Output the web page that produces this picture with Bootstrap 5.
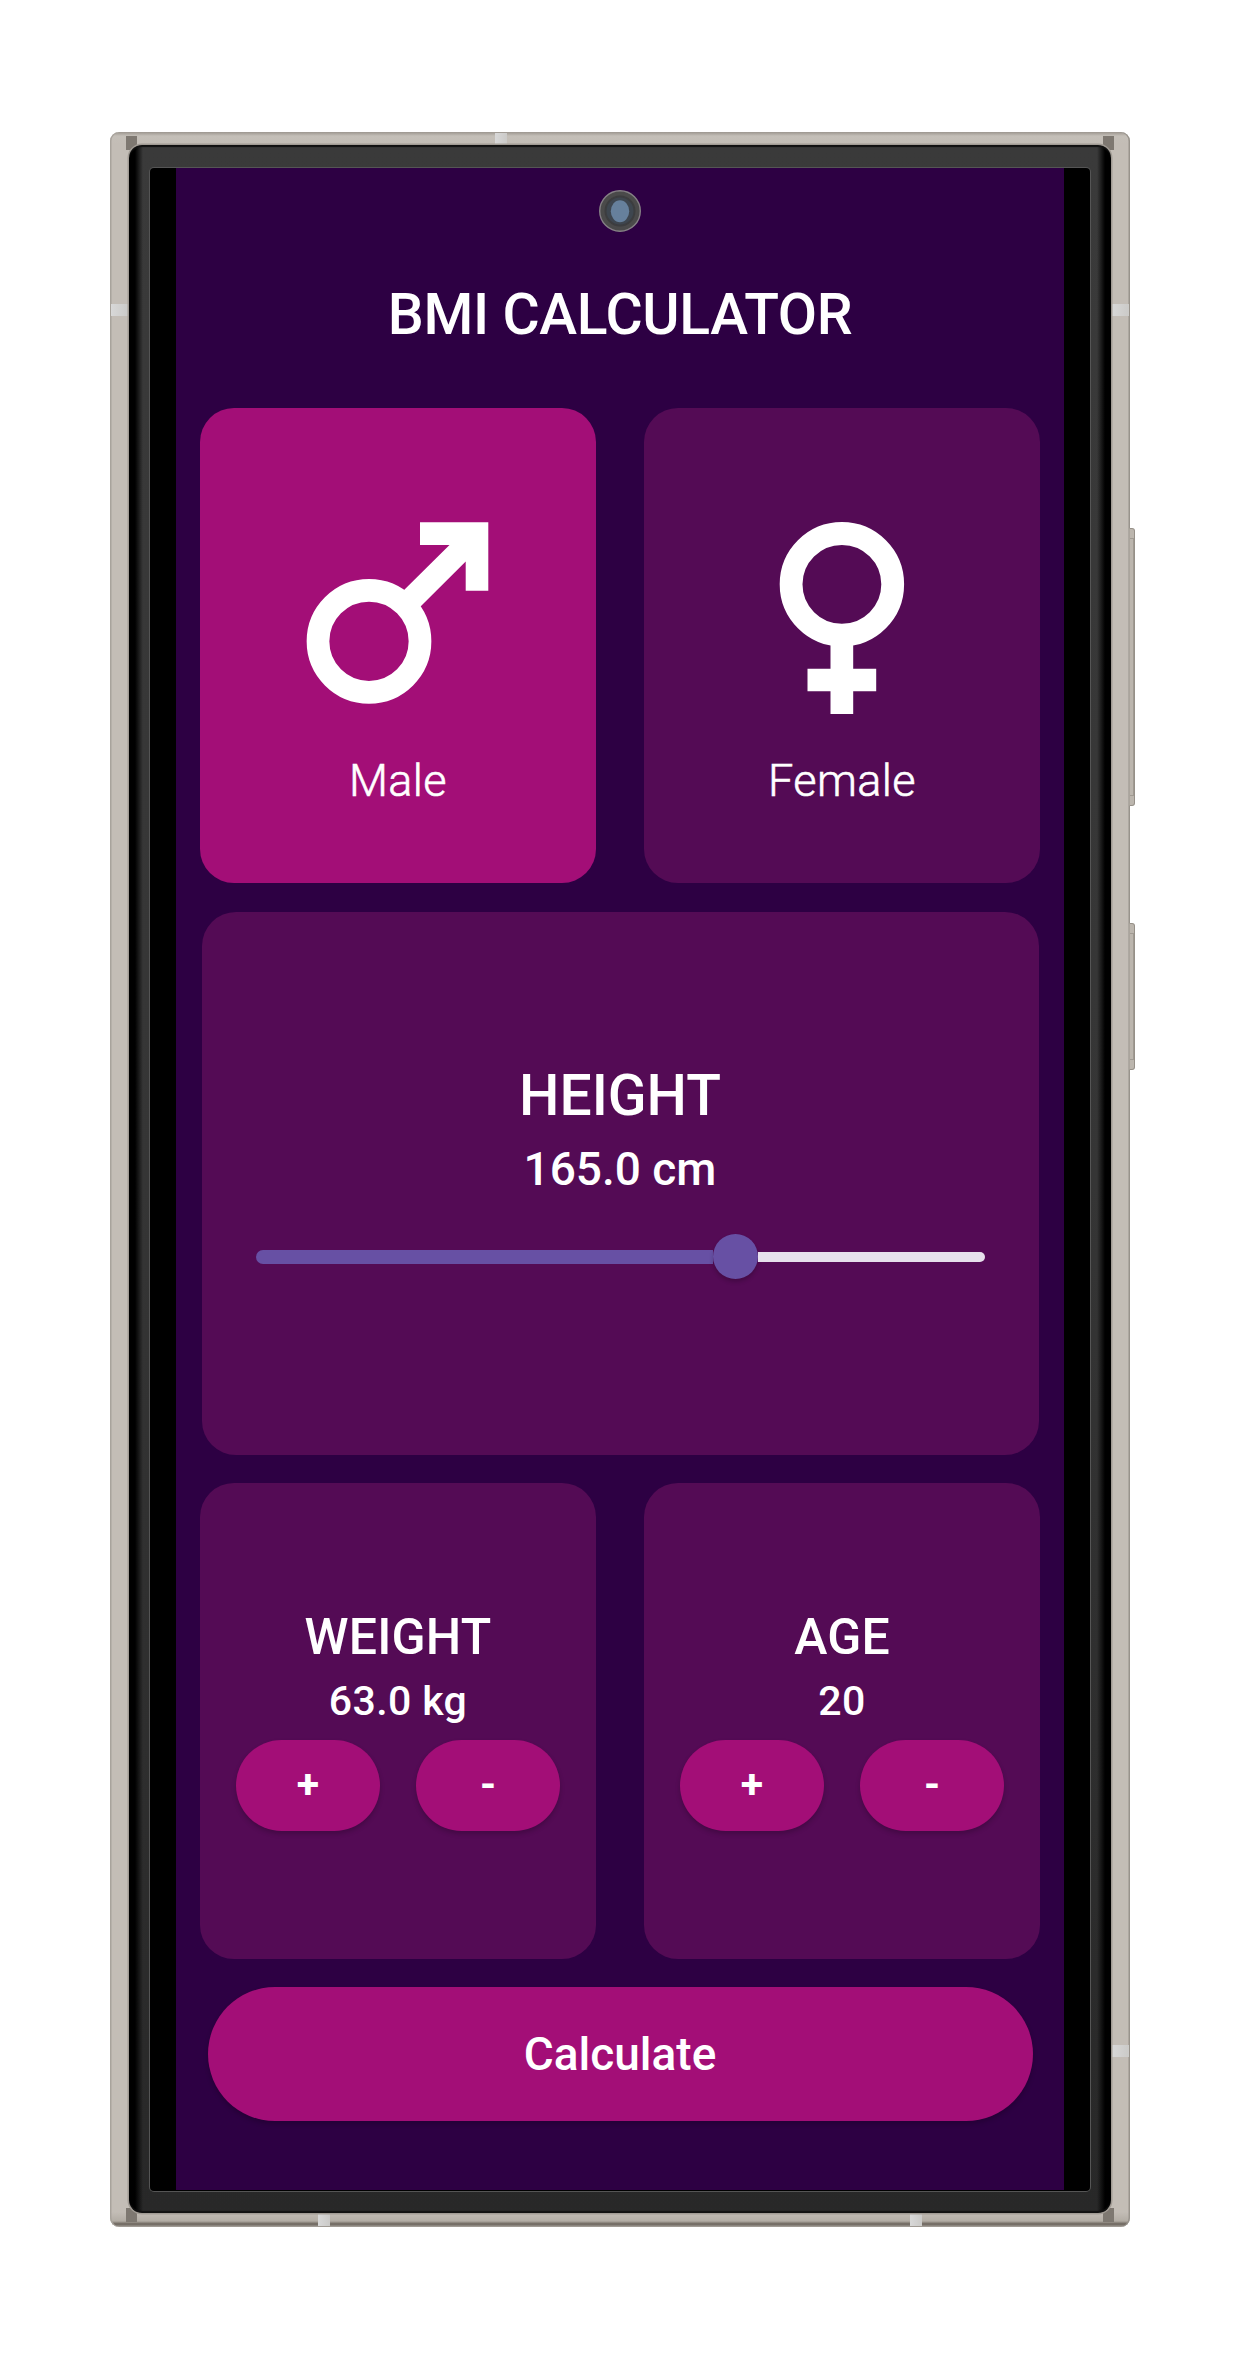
<!DOCTYPE html>
<html lang="en">
<head>
<meta charset="utf-8">
<meta name="viewport" content="width=device-width, initial-scale=1">
<title>BMI Calculator</title>
<link href="https://cdn.jsdelivr.net/npm/bootstrap@5.3.0/dist/css/bootstrap.min.css" rel="stylesheet">
<style>
  body { background: #fff; font-family: Roboto, "Liberation Sans", sans-serif; color: #fff; }
  .stage { min-height: 2359px; padding: 132px 0 0 110px; }

  /* device shell */
  .phone { width: 1020px; height: 2095px; padding: 13px 19px 14px 19px; border-radius: 9px;
    background: linear-gradient(180deg, #9c968f 0, #c4bfb8 4px, #c3bdb6 12px, #c3bdb6 2080px, #b3ada5 2089px, #6b645c 2092px, #aaa59f 2095px);
    box-shadow: inset 1.5px 0 0 #a8a39c, inset -1.5px 0 0 #98938c; }
  .bezel { width: 982px; height: 2068px; padding: 23px 21px 22px; border-radius: 13px; position: relative; z-index: 1;
    background: linear-gradient(90deg, #000 0 6px, rgba(0,0,0,0) 14px 968px, #000 976px), linear-gradient(180deg, #3a3a3a, #353535 50%, #282828);
    box-shadow: 0 0 0 1.5px #a19b94, inset 0 2px 1px #111, inset 0 -2px 1px #111; }
  .glass { background: #000; border-radius: 4px; padding: 0 26px 1px; box-shadow: 0 0 0 1px #555; height: 2023px; }
  .screen { background: #2d0043; height: 2022px; padding: 0 24px; position: relative; }
  .corner { position: absolute; width: 11px; height: 14px; background: #7e7871; }
  .corner-tl { left: 16px; top: 4px; } .corner-tr { right: 16px; top: 4px; }
  .corner-bl { left: 16px; bottom: 5px; } .corner-br { right: 16px; bottom: 5px; }
  .antenna { position: absolute; background: linear-gradient(90deg, #d8d8d8, #cbcac8); }
  .antenna-v { width: 17px; height: 12px; } .antenna-h { width: 12px; height: 12px; }
  .side-key { position: absolute; left: 1019px; width: 6px; background: #bcb6ae; border: 1px solid #969088; border-left-color: #aaa49c; border-radius: 0 3px 3px 0; }
  .side-key::after { content: ""; position: absolute; inset: 9px 0 9px 0; border: solid #a09a92; border-width: 1px 1px 1px 0; }
  .camera { position: absolute; left: 423px; top: 22px; }

  /* app */
  .app-title { height: 240px; padding-top: 113px; font-size: 57px; font-weight: 500; letter-spacing: -.35px; }
  .tile { background: #540b55; border-radius: 34px; }
  .tile-on { background: #a30e77; }
  .pair { gap: 48px; }
  .gender { height: 475px; padding-top: 114px; }
  .gender-label { font-size: 45px; line-height: 56px; margin-top: 39px; font-weight: 300; letter-spacing: .4px; -webkit-text-stroke: .6px #fff; }
  .height-tile { height: 543px; margin: 28.5px 1.5px; padding: 151px 54px 0; }
  .t-lg { font-size: 57px; line-height: 66px; font-weight: 500; }
  .t-md { font-size: 46px; line-height: 56px; font-weight: 500; margin-top: 12px; }
  .t-sub { font-size: 50px; line-height: 58px; font-weight: 500; letter-spacing: .2px; }
  .t-sm { font-size: 41px; line-height: 48px; font-weight: 500; letter-spacing: .4px; margin-top: 11px; }
  .track { height: 46px; margin-top: 37px; }
  .track-on { width: 457px; height: 14px; border-radius: 7px 0 0 7px; background: #6750a4; }
  .knob { width: 45px; height: 45px; flex: none; border-radius: 50%; background: #6750a4; box-shadow: 0 3px 4px rgba(0,0,0,.2); }
  .track-off { height: 10px; border-radius: 0 5px 5px 0; background: #e7e0ec; }
  .stat { height: 476px; padding-top: 125px; }
  .steps { gap: 35.5px; margin-top: 15px; }
  .btn.step { width: 144.5px; height: 91px; padding: 0 0 2px; border: 0; border-radius: 46px; background: #a30e77; color: #fff; font-size: 41px; font-weight: 700; line-height: 89px; box-shadow: 0 3px 5px rgba(0,0,0,.2); }
  .btn.calc { display: block; width: 825px; height: 134px; margin: 28px auto 0; padding: 0; border: 0; border-radius: 67px; background: #a30e77; color: #fff; font-size: 46px; font-weight: 500; box-shadow: 0 3px 5px rgba(0,0,0,.2); }
</style>
</head>
<body>
<main class="stage">
  <div class="phone position-relative">
    <i class="corner corner-tl"></i><i class="corner corner-tr"></i><i class="corner corner-bl"></i><i class="corner corner-br"></i>
    <i class="antenna antenna-v" style="left:1px;top:172px"></i>
    <i class="antenna antenna-v" style="left:1002px;top:172px"></i>
    <i class="antenna antenna-v" style="left:1002px;top:1913px"></i>
    <i class="antenna antenna-h" style="left:385px;top:1px"></i>
    <i class="antenna antenna-h" style="left:208px;top:2082px"></i>
    <i class="antenna antenna-h" style="left:800px;top:2082px"></i>
    <i class="side-key" style="top:396px;height:278px"></i>
    <i class="side-key" style="top:791px;height:147px"></i>
    <div class="bezel">
      <div class="glass">
        <div class="screen">
          <svg class="camera" width="42" height="42" viewBox="0 0 42 42"><circle cx="21" cy="21" r="20.3" fill="#4a4a4a" stroke="#858085" stroke-width="1.4"/><circle cx="21" cy="21" r="15.5" fill="#3c3d3f"/><circle cx="21" cy="21" r="13.5" fill="#3e464f"/><ellipse cx="21" cy="21.3" rx="9.2" ry="11" fill="#66809c"/></svg>
          <h1 class="app-title text-center m-0">BMI CALCULATOR</h1>

          <section class="pair d-flex">
            <div class="tile tile-on gender flex-fill w-50 text-center">
              <svg class="d-block mx-auto" width="192" height="192" viewBox="302 522 192 192"><circle cx="369" cy="641.3" r="51" fill="none" stroke="#fff" stroke-width="22.7"/><path fill="#fff" d="M420 522.3h68.3v68.4h-22.6v-29.2L416 611l-17-16 50.5-50H420z"/></svg>
              <div class="gender-label">Male</div>
            </div>
            <div class="tile gender flex-fill w-50 text-center">
              <svg class="d-block mx-auto" width="192" height="192" viewBox="745.5 522 192 192"><circle cx="841.4" cy="584.3" r="50.8" fill="none" stroke="#fff" stroke-width="22.8"/><path fill="#fff" d="M830 640h22.7v28.7h23v22.6h-23V714H830v-22.7h-23v-22.6h23z"/></svg>
              <div class="gender-label">Female</div>
            </div>
          </section>

          <section class="tile height-tile text-center">
            <div class="t-lg">HEIGHT</div>
            <div class="t-md">165.0 cm</div>
            <div class="track d-flex align-items-center">
              <div class="track-on"></div><div class="knob"></div><div class="track-off flex-fill"></div>
            </div>
          </section>

          <section class="pair d-flex">
            <div class="tile stat flex-fill w-50 text-center">
              <div class="t-sub">WEIGHT</div>
              <div class="t-sm">63.0 kg</div>
              <div class="steps d-flex justify-content-center"><button class="btn step">+</button><button class="btn step">-</button></div>
            </div>
            <div class="tile stat flex-fill w-50 text-center">
              <div class="t-sub">AGE</div>
              <div class="t-sm">20</div>
              <div class="steps d-flex justify-content-center"><button class="btn step">+</button><button class="btn step">-</button></div>
            </div>
          </section>

          <button class="btn calc">Calculate</button>
        </div>
      </div>
    </div>
  </div>
</main>
<script src="https://cdn.jsdelivr.net/npm/bootstrap@5.3.0/dist/js/bootstrap.bundle.min.js"></script>
</body>
</html>
